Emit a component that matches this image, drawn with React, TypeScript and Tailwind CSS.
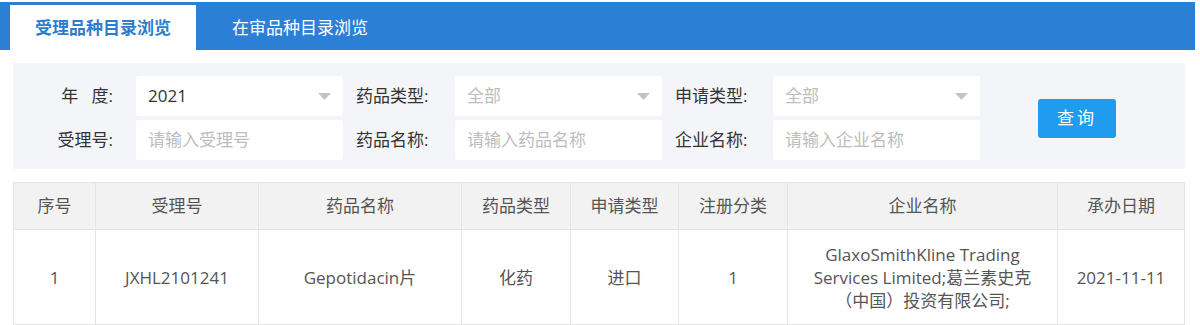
import React from "react";

const font = { fontFamily: '"Open Sans", "Noto Sans CJK SC", sans-serif' };

const inputBox =
  "flex h-[40px] w-[207px] items-center rounded-[3px] bg-white px-3 text-[17px]";

function Caret() {
  return (
    <svg width="13" height="7" viewBox="0 0 13 7" className="ml-auto">
      <path d="M0 0h13L6.5 7z" fill="#c4c4c4" />
    </svg>
  );
}

function SelectBox({ value, muted }: { value: string; muted?: boolean }) {
  return (
    <div className={inputBox}>
      <span className={muted ? "text-[#bdbdbd]" : "text-[#333]"}>{value}</span>
      <Caret />
    </div>
  );
}

function TextBox({ placeholder }: { placeholder: string }) {
  return (
    <div className={inputBox}>
      <span className="text-[#bdbdbd]">{placeholder}</span>
    </div>
  );
}

const columns = [
  { title: "序号", w: "w-[82px]" },
  { title: "受理号", w: "w-[163px]" },
  { title: "药品名称", w: "w-[203px]" },
  { title: "药品类型", w: "w-[109px]" },
  { title: "申请类型", w: "w-[108px]" },
  { title: "注册分类", w: "w-[109px]" },
  { title: "企业名称", w: "w-[270px]" },
  { title: "承办日期", w: "w-[127px]" },
];

export default function App() {
  return (
    <div className="h-[325px] w-[1200px] overflow-hidden bg-white" style={font}>
      {/* tabs */}
      <div className="mt-[2px] flex h-[48px] w-[1195px] items-end bg-[#2b7fd4] pl-[10px]">
        <div className="flex h-[45px] w-[186px] items-center justify-center bg-white text-[17px] font-bold text-[#2e7ccf]">
          受理品种目录浏览
        </div>
        <div className="flex h-[45px] items-center pl-[36px] text-[17px] text-white">
          在审品种目录浏览
        </div>
      </div>

      <div className="px-[13px] pt-[13px]">
        {/* filters */}
        <div className="flex w-[1172px] items-center bg-[#f4f5f8] pb-[9px] pt-[13px] text-[17px] text-[#333]">
          <div className="flex flex-col gap-[4px]">
            <div className="flex items-center">
              <div className="w-[100px] whitespace-pre text-right">年   度:</div>
              <div className="ml-[23px]">
                <SelectBox value="2021" />
              </div>
              <div className="ml-[13px] w-[77px]">药品类型:</div>
              <div className="ml-[22px]">
                <SelectBox value="全部" muted />
              </div>
              <div className="ml-[13px] w-[77px]">申请类型:</div>
              <div className="ml-[21px]">
                <SelectBox value="全部" muted />
              </div>
            </div>
            <div className="flex items-center">
              <div className="w-[100px] text-right">受理号:</div>
              <div className="ml-[23px]">
                <TextBox placeholder="请输入受理号" />
              </div>
              <div className="ml-[13px] w-[77px]">药品名称:</div>
              <div className="ml-[22px]">
                <TextBox placeholder="请输入药品名称" />
              </div>
              <div className="ml-[13px] w-[77px]">企业名称:</div>
              <div className="ml-[21px]">
                <TextBox placeholder="请输入企业名称" />
              </div>
            </div>
          </div>
          <button className="ml-[58px] flex h-[39px] w-[78px] items-center justify-center rounded-[3px] bg-[#1f9cf0] text-[17px] tracking-[3px] text-white">
            查询
          </button>
        </div>

        {/* table */}
        <table className="mt-[13px] w-[1171px] table-fixed border-collapse text-[17px] text-[#555]">
          <colgroup>
            {columns.map((c) => (
              <col key={c.title} className={c.w} />
            ))}
          </colgroup>
          <thead>
            <tr className="h-[47px] bg-[#f2f2f2]">
              {columns.map((c) => (
                <th key={c.title} className="border border-[#e4e4e4] font-normal">
                  {c.title}
                </th>
              ))}
            </tr>
          </thead>
          <tbody>
            <tr className="h-[95px] text-center leading-[23px]">
              <td className="border border-[#e4e4e4]">1</td>
              <td className="border border-[#e4e4e4]">JXHL2101241</td>
              <td className="border border-[#e4e4e4]">Gepotidacin片</td>
              <td className="border border-[#e4e4e4]">化药</td>
              <td className="border border-[#e4e4e4]">进口</td>
              <td className="border border-[#e4e4e4]">1</td>
              <td className="border border-[#e4e4e4] px-2 whitespace-nowrap">
                GlaxoSmithKline Trading
                <br />
                Services Limited;葛兰素史克
                <br />
                （中国）投资有限公司;
              </td>
              <td className="border border-[#e4e4e4]">2021-11-11</td>
            </tr>
          </tbody>
        </table>
      </div>
    </div>
  );
}
